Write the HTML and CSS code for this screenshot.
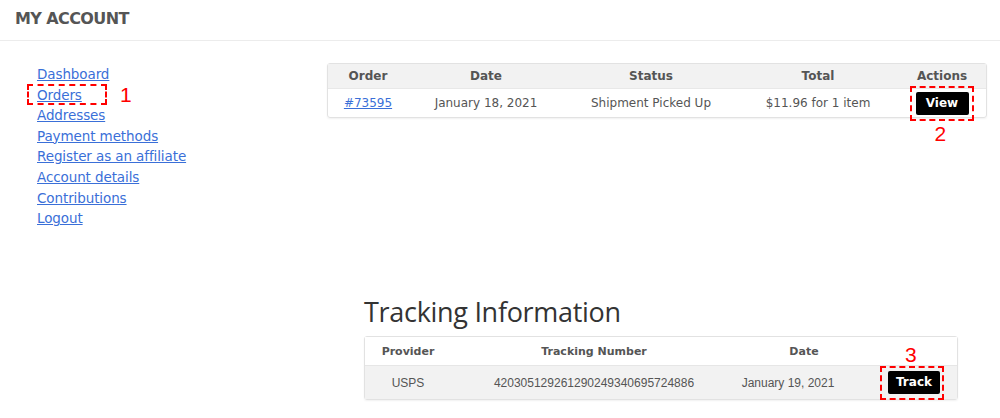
FILE: index.html
```html
<!DOCTYPE html>
<html lang="en">
<head>
  <meta charset="UTF-8">
  <title>My Account</title>
  <link rel="stylesheet" href="styles.css">
</head>
<body>
  <header class="page-header">
    <h1>MY ACCOUNT</h1>
  </header>

  <div class="account">
    <nav class="account-nav">
      <a href="#">Dashboard</a>
      <a href="#" class="marked">Orders<span class="mark-box"></span><span class="mark-num num-1">1</span></a>
      <a href="#">Addresses</a>
      <a href="#">Payment methods</a>
      <a href="#">Register as an affiliate</a>
      <a href="#">Account details</a>
      <a href="#">Contributions</a>
      <a href="#">Logout</a>
    </nav>

    <main class="account-content">
      <table class="orders">
        <colgroup>
          <col style="width:80px"><col style="width:156px"><col style="width:174px"><col style="width:160px"><col>
        </colgroup>
        <thead>
          <tr><th>Order</th><th>Date</th><th>Status</th><th>Total</th><th>Actions</th></tr>
        </thead>
        <tbody>
          <tr>
            <td><a href="#">#73595</a></td>
            <td>January 18, 2021</td>
            <td>Shipment Picked Up</td>
            <td>$11.96 for 1 item</td>
            <td><span class="marked"><a href="#" class="btn">View</a><span class="mark-box"></span><span class="mark-num num-2">2</span></span></td>
          </tr>
        </tbody>
      </table>

      <section class="tracking">
        <h2>Tracking Information</h2>
        <table class="tracking-table">
          <colgroup>
            <col style="width:86px"><col style="width:286px"><col style="width:118px"><col>
          </colgroup>
          <thead>
            <tr><th>Provider</th><th>Tracking Number</th><th class="date-head">Date</th><th></th></tr>
          </thead>
          <tbody>
            <tr>
              <td>USPS</td>
              <td>420305129261290249340695724886</td>
              <td class="date-cell">January 19, 2021</td>
              <td><span class="marked"><a href="#" class="btn">Track</a><span class="mark-box"></span><span class="mark-num num-3">3</span></span></td>
            </tr>
          </tbody>
        </table>
      </section>
    </main>
  </div>
</body>
</html>
```

FILE: styles.css
```css
* {
  box-sizing: border-box;
  margin: 0;
  padding: 0;
}

body {
  background: #fff;
  font-family: "DejaVu Sans", Verdana, sans-serif;
  color: #555;
  width: 1000px;
  height: 418px;
  overflow: hidden;
}

.page-header {
  height: 41px;
  border-bottom: 1px solid #ececec;
  padding: 9px 15px 0;
}

.page-header h1 {
  font-size: 16px;
  font-weight: bold;
  color: #555;
  letter-spacing: -0.6px;
}

.account {
  display: flex;
}

/* left menu */
.account-nav {
  width: 327px;
  padding: 23px 0 0 37px;
  display: flex;
  flex-direction: column;
  align-items: flex-start;
}

.account-nav a {
  font-size: 13.5px;
  line-height: 20.6px;
  color: #3a6fd8;
  text-decoration: underline;
  letter-spacing: -0.1px;
}

/* red dashed call-outs */
.marked {
  position: relative;
  display: inline-block;
}

.mark-box {
  position: absolute;
  border: 2px dashed #f00;
  pointer-events: none;
}

.account-nav .mark-box {
  left: -10px;
  top: -1px;
  width: 80px;
  height: 21px;
}

.mark-num {
  position: absolute;
  font-family: "Liberation Sans", Arial, sans-serif;
  font-size: 21px;
  color: #f00;
  line-height: 1;
  text-decoration: none;
}

.num-1 { left: 83px; top: -1px; }
.num-2 { left: 19px; top: 31px; }
.num-3 { left: 33px; top: -27px; }

/* orders table */
.account-content {
  flex: 1;
  padding-top: 22px;
}

table {
  border-collapse: separate;
  border-spacing: 0;
  table-layout: fixed;
}

.orders {
  width: 660px;
  border: 1px solid #e2e2e2;
  border-radius: 3px;
  box-shadow: 0 1px 2px rgba(0, 0, 0, 0.06);
}

.orders th {
  background: #f2f2f2;
  height: 24px;
  font-size: 12px;
  font-weight: bold;
  color: #555;
  text-align: center;
  vertical-align: middle;
}

.orders td {
  height: 29px;
  font-size: 12px;
  color: #555;
  text-align: center;
  vertical-align: middle;
  border-top: 1px solid #e8e8e8;
}

.orders td a {
  color: #3a6fd8;
}

.btn {
  display: inline-block;
  background: #000;
  color: #fff;
  font-weight: bold;
  font-size: 12px;
  text-decoration: none;
  text-align: center;
  border-radius: 2px;
  height: 23px;
  line-height: 23px;
}

.orders .btn {
  color: #fff;
  width: 53px;
  vertical-align: middle;
}

.orders .mark-box {
  left: -6px;
  top: -6px;
  width: 64px;
  height: 35px;
}

/* tracking */
.tracking {
  padding: 177px 0 0 37px;
}

.tracking h2 {
  font-family: "Open Sans", sans-serif;
  font-weight: normal;
  font-size: 27px;
  color: #333;
  line-height: 34px;
  margin-bottom: 7px;
  letter-spacing: -0.3px;
}

.tracking-table {
  width: 594px;
  border: 1px solid #e2e2e2;
  border-radius: 3px;
  box-shadow: 0 1px 2px rgba(0, 0, 0, 0.06);
}

.tracking-table th {
  height: 28px;
  background: #fff;
  font-size: 11px;
  font-weight: bold;
  color: #555;
  text-align: center;
  vertical-align: middle;
}

.tracking-table .date-head {
  padding-left: 16px;
}

.tracking-table td {
  height: 34px;
  background: #f2f2f2;
  border-top: 1px solid #e6e6e6;
  font-family: "Liberation Sans", Arial, sans-serif;
  font-size: 12px;
  color: #555;
  text-align: center;
  vertical-align: middle;
}

.tracking-table .date-cell {
  padding-right: 16px;
}

.tracking-table .btn {
  font-family: "DejaVu Sans", Verdana, sans-serif;
  width: 52px;
  height: 23px;
  line-height: 23px;
  vertical-align: middle;
  margin-left: 16px;
}

.tracking-table .marked {
  vertical-align: middle;
}

.tracking-table .mark-box {
  left: 8px;
  top: -5px;
  width: 64px;
  height: 34px;
}
```
